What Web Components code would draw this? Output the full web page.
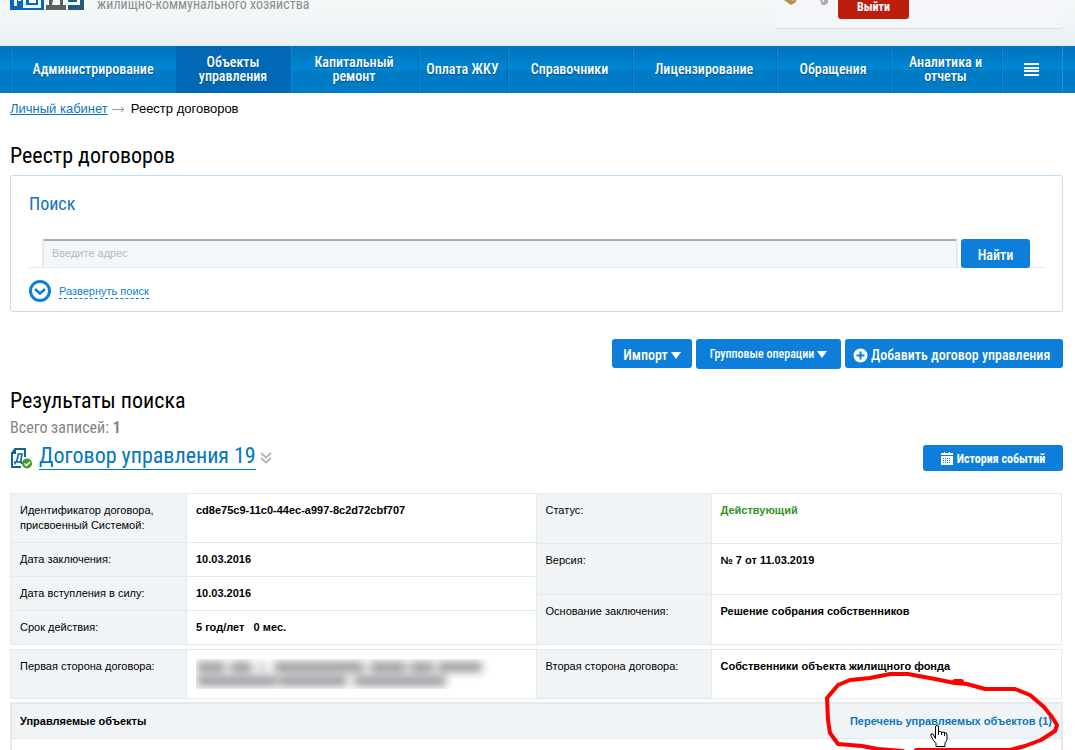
<!DOCTYPE html>
<html lang="ru">
<head>
<meta charset="utf-8">
<title>Реестр договоров</title>
<style>
  :root {
    --cond: "Roboto Condensed", "Liberation Sans Narrow", Roboto, sans-serif;
    --blue: #0d7ed9;
    --link: #0d74bd;
    --line: #e4e9ec;
    --tint: #f0f4f7;
  }
  body { margin: 0; background: #fff; color: #000; font: 11px/15px "Liberation Sans", Arial, sans-serif; }
</style>
</head>
<body>
<registry-page></registry-page>
<script>
const define = (name, html) => customElements.define(name, class extends HTMLElement {
  constructor() {
    super();
    const t = document.createElement('template');
    t.innerHTML = html;
    this.attachShadow({ mode: 'open' }).append(t.content.cloneNode(true));
  }
});

define('site-header', `
<style>
  :host { display: flex; align-items: flex-end; justify-content: space-between; height: 46px; overflow: hidden;
    padding: 0 12px 0 10px; background: linear-gradient(#f5f9f9, #e9f0f3); }
  .brand { display: flex; align-items: flex-end; gap: 13px; padding-bottom: 36px; }
  svg { display: block; }
  .brand p { margin: 0 0 -2px; font: 14px/16px var(--cond); color: #8d8d8d; }
  .user { box-sizing: border-box; display: flex; align-items: flex-end; width: 288px; height: 60px; margin-bottom: 17px;
    padding: 0 4px 9px; background: #f5f6f9; border-bottom: 1px solid #dcdfe1; border-radius: 4px; }
  .user svg { margin-bottom: 13px; }
  button { width: 71px; height: 29px; padding: 5px 0 0; margin-left: 3px; border: 0; border-radius: 3px; background: #bb1e0c; color: #fff;
    font: bold 12px/16px var(--cond); }
</style>
<div class="brand">
  <svg width="74" height="30" viewBox="0 0 74 30" aria-hidden="true">
    <path fill="#0568ba" d="M0 0h34v30H0z"/><path fill="#5f5f5f" d="M36 0h20v30H36z"/><path fill="#225a88" d="M58 0h16v30H58z"/>
    <path fill="none" stroke="#f3f8f9" stroke-width="3" d="M5.500 18v8M9.500 18v3M14.500 18v8.500H29.500V18M19 21.500h7"/>
    <path fill="#f3f8f9" d="M36 18h3v7h-3zM43 20h7v5h-8zM53 18h3v7h-3zM58 22h9v-4h3v7H58z"/>
  </svg>
  <p>жилищно-коммунального хозяйства</p>
</div>
<div class="user">
  <svg width="56" height="20" viewBox="0 0 56 20" aria-hidden="true">
    <path fill="#b98d4e" d="M2 12l10 7 5-3 1-6z"/><path fill="#e8c98c" d="M8 12l6 3 3-3z"/><path fill="#a9abae" d="M40 12h9v5l-3 2h-3z"/><path fill="#dedfe1" d="M40 12h5v5z"/>
  </svg>
  <button type="button">Выйти</button>
</div>`);

define('main-nav', `
<style>
  :host { display: block; padding: 0 12px 0 10px; background: linear-gradient(#0073bd, #0086d4 50%, #007cc6 51%, #007cc6); }
  nav { display: grid; grid-template-columns: 166fr 114fr 128fr 89fr 125fr 144fr 114fr 111fr 61fr; height: 47px;
    border-right: 1px solid #1f90d6; }
  a { display: flex; align-items: center; justify-content: center; padding-bottom: 2px; text-align: center; text-decoration: none; color: #fff;
    font: 500 14px/14px var(--cond); text-shadow: 0 1px 1px #00508c; box-shadow: inset 1px 0 #006cb3, inset 2px 0 #1088d0; }
  a.on { background: #0068b5; box-shadow: none; }
</style>
<nav>
  <a href="#">Администрирование</a><a href="#" class="on">Объекты<br>управления</a><a href="#">Капитальный<br>ремонт</a>
  <a href="#">Оплата ЖКУ</a><a href="#">Справочники</a><a href="#">Лицензирование</a><a href="#">Обращения</a>
  <a href="#">Аналитика и<br>отчеты</a>
  <a href="#" aria-label="Меню"><svg width="15" height="14" viewBox="0 0 15 14"><path fill="#fff" d="M0 1h15v2H0zM0 5h15v2H0zM0 8h15v2H0zM0 12h15v2H0z"/></svg></a>
</nav>`);

define('bread-crumbs', `
<style>
  :host { display: flex; align-items: center; gap: 4px; font-size: 13px; line-height: 16px; }
  a { color: var(--link); }
  svg { display: block; margin-right: 2px; }
</style>
<a href="#">Личный кабинет</a>
<svg width="13" height="7" viewBox="0 0 13 7" aria-hidden="true"><path fill="none" stroke="#999" d="M0 3.500h12M9 1l3 2.500L9 6"/></svg>
<span>Реестр договоров</span>`);

define('search-panel', `
<style>
  :host { display: block; border: 1px solid #bfdff5; border-radius: 3px; padding: 15px 18px 9px; }
  h2 { margin: 0 0 23px; font: 18px/25px var(--cond); color: var(--link); }
  form { display: flex; gap: 3px; padding: 0 14px 0 13px; border-bottom: 1px solid #e4e6e8; }
  input { box-sizing: border-box; flex: 1; min-width: 0; height: 29px; margin: 0 0 -1px; padding: 0 8px 2px; border: 2px solid #e4e9ec; border-bottom-width: 1px;
    border-top-color: #a7abae; border-radius: 3px 3px 0 0; background: #f3f7fc; font: 11px "Liberation Sans", Arial, sans-serif; color: #333; }
  input::placeholder { color: #b9b9b9; opacity: 1; }
  form button { width: 69px; height: 29px; margin: 0 0 -1px; padding: 2px 0 0; border: 0; border-radius: 3px; background: var(--blue); color: #fff; font: 500 14px/16px var(--cond); }
  .more { display: flex; align-items: center; gap: 8px; width: max-content; margin-top: 12px; padding: 0; border: 0; background: none; color: var(--blue);
    font: 11px/14px "Liberation Sans", Arial, sans-serif; }
  .more span { border-bottom: 1px dashed var(--blue); }
  svg { display: block; }
</style>
<h2>Поиск</h2>
<form onsubmit="return false">
  <input type="text" placeholder="Введите адрес" aria-label="Введите адрес"><button type="submit">Найти</button>
</form>
<button type="button" class="more"><svg width="22" height="22" viewBox="0 0 22 22" aria-hidden="true"><circle cx="11" cy="11" r="9.500" fill="none" stroke="#0d7ed9" stroke-width="3"/><path fill="none" stroke="#0d7ed9" stroke-width="2.500" d="M6 9l5 4.500L16 9"/></svg><span>Развернуть поиск</span></button>`);

define('action-bar', `
<style>
  :host { display: flex; justify-content: flex-end; align-items: flex-start; gap: 4px; }
  button { display: flex; align-items: center; justify-content: center; gap: 3px; height: 29px; padding: 3px 12px 0; border: 0; border-radius: 3px;
    background: var(--blue); color: #fff; font: 500 14px/16px var(--cond); white-space: nowrap; }
  .imp { width: 80px; } .grp { width: 145px; height: 30px; padding-top: 0; font-size: 12px; } .add { width: 218px; padding: 3px 8px 0; justify-content: flex-start; }
  svg { display: block; flex: none; }
</style>
<button type="button" class="imp">Импорт <svg width="10" height="7" viewBox="0 0 10 7"><path fill="#fff" d="M0 0h10L5 7z"/></svg></button>
<button type="button" class="grp">Групповые операции <svg width="10" height="7" viewBox="0 0 10 7"><path fill="#fff" d="M0 0h10L5 7z"/></svg></button>
<button type="button" class="add"><svg width="15" height="15" viewBox="0 0 15 15"><circle cx="7.500" cy="7.500" r="7" fill="#fff"/><path stroke="#0d7ed9" stroke-width="2" d="M7.500 3.500v8M3.500 7.500h8"/></svg> Добавить договор управления</button>`);

define('contract-title', `
<style>
  :host { display: flex; align-items: center; height: 28px; }
  a { margin: 0 4px 2px 7px; padding-bottom: 1px; font: 22px/24px var(--cond); color: #0277bd; text-decoration: none; border-bottom: 1px solid #0277bd; }
  svg { display: block; flex: none; }
  button { display: flex; align-items: center; justify-content: center; gap: 4px; width: 140px; height: 26px; margin-left: auto; padding: 1px 0 0; border: 0; border-radius: 3px;
    background: var(--blue); color: #fff; font: bold 12px/16px var(--cond); }
</style>
<svg width="22" height="21" viewBox="0 0 22 21" aria-hidden="true">
  <path fill="none" stroke="#10649b" stroke-width="2" d="M11 19H2V5l3-4h10v8"/><path fill="#10649b" d="M1 6h5V1z"/>
  <path fill="none" stroke="#10649b" stroke-width="1.600" d="M5 16.500v-2.500h6.500v2M6.500 14L8.500 6h3.500l-1.500 8"/>
  <circle cx="17" cy="15.500" r="5" fill="#47992c"/><path fill="none" stroke="#fff" stroke-width="1.500" d="M14.500 15.500l2 2 3.500-3.500"/>
</svg>
<a href="#">Договор управления 19</a>
<svg width="12" height="12" viewBox="0 0 12 12" aria-hidden="true"><path fill="none" stroke="#b5b5b5" stroke-width="1.800" d="M1 1l5 4.500L11 1M1 6l5 4.500L11 6"/></svg>
<button type="button"><svg width="12" height="13" viewBox="0 0 12 13" aria-hidden="true"><path fill="#fff" d="M1 1h2V0h1v1h4V0h1v1h3v2H0V1zM0 4h12v9H0z"/><path stroke="#0d7ed9" stroke-width="1" stroke-dasharray="1 1" d="M2 6.500h8M2 8.500h8M2 10.500h8"/></svg>История событий</button>`);

const tableCss = `
<style>
  :host { display: grid; grid-template-columns: 1fr 1fr; align-items: start; margin-right: 1px; background: linear-gradient(var(--line), var(--line)) 0 0 / 100% 1px no-repeat;
    border-right: 1px solid var(--line); border-bottom: 1px solid var(--line); }
  table { border-spacing: 0; width: 100%; table-layout: fixed; height: 100%; }
  th, td { box-sizing: border-box; padding: 9px; vertical-align: top; text-align: left; border: 0 solid var(--line); border-top-width: 1px; }
  th { width: 177px; font-weight: normal; background: var(--tint); border-left-width: 1px; border-right-width: 1px; }
  td { font-weight: bold; white-space: pre-wrap; }
  table + table th { width: 176px; }
  .a tr { height: 34px; } .b tr { height: 50px; } .c tr { height: 49px; }
  .ok { color: #2f931c; }
  svg { display: block; }
</style>`;

define('contract-details', tableCss + `
<table class="a"><tbody>
  <tr><th scope="row">Идентификатор договора, присвоенный Системой:</th><td>cd8e75c9-11c0-44ec-a997-8c2d72cbf707</td></tr>
  <tr><th scope="row">Дата заключения:</th><td>10.03.2016</td></tr>
  <tr><th scope="row">Дата вступления в силу:</th><td>10.03.2016</td></tr>
  <tr><th scope="row">Срок действия:</th><td>5 год/лет   0 мес.</td></tr>
</tbody></table>
<table class="b"><tbody>
  <tr><th scope="row">Статус:</th><td class="ok">Действующий</td></tr>
  <tr><th scope="row">Версия:</th><td>№ 7 от 11.03.2019</td></tr>
  <tr><th scope="row">Основание заключения:</th><td>Решение собрания собственников</td></tr>
</tbody></table>`);

define('contract-parties', tableCss + `
<table class="c"><tbody><tr><th scope="row">Первая сторона договора:</th><td><svg width="295" height="30" viewBox="0 0 295 30" role="img" aria-label="Скрыто"><g fill="none" stroke="#77737a" stroke-width="10" opacity=".75" style="filter:blur(4px)"><path d="M1 8h28M34 8h22M64 8h4M78 8h90M174 8h36M214 8h24M242 8h44"/><path d="M1 22h80M83 22h68M158 22h92"/></g></svg></td></tr></tbody></table>
<table class="c"><tbody><tr><th scope="row">Вторая сторона договора:</th><td>Собственники объекта жилищного фонда</td></tr></tbody></table>`);

define('managed-objects', `
<style>
  :host { display: block; position: relative; border: 2px solid var(--line); border-bottom: 0; }
  header { display: flex; align-items: center; justify-content: space-between; height: 34px; padding: 0 9px 0 8px; background: var(--tint); border-bottom: 1px solid var(--line); }
  h3 { margin: 0; font: bold 11px/15px "Liberation Sans", Arial, sans-serif; }
  a { color: var(--link); font-weight: bold; text-decoration: none; }
  .body { height: 11px; }
  svg { position: absolute; right: -2px; bottom: 0; pointer-events: none; }
</style>
<header><h3>Управляемые объекты</h3><a href="#">Перечень управляемых объектов (1)</a></header>
<div class="body"></div>
<svg width="240" height="80" viewBox="823 670 240 80" aria-hidden="true">
  <path fill="none" stroke="#f00" stroke-width="4" stroke-linejoin="round" stroke-linecap="round" d="M903 751L878 749 862 746 838 744 830 733 828 720 827 698 838 685 850 680 870 678 890 674 908 674 935 679 955 683 967 684 985 689 1015 689 1030 695 1044 707 1052 717 1057 725 1055 731 1041 740 1025 746 1010 750H916"/>
  <path stroke="#f00" stroke-width="6" stroke-linecap="round" d="M955 682h6"/>
  <path fill="#fff" stroke="#000" stroke-linejoin="round" d="M935.500 738.500V727q0-1.500 1.500-1.500t1.500 1.500v5l2-.500 1.500 1 2-.500 1 1 1.500 0 .500 2v5l-2 3v3.500h-9v-3l-3-4-2-3.500v-2h2z"/>
  <path stroke="#000" d="M938.500 731v4M941.500 732v3M944.500 733v3"/>
</svg>`);

define('registry-page', `
<style>
  :host { display: block; }
  main { padding: 8px 12px 0 10px; }
  h1, h2 { margin: 0; font: 22px/26px var(--cond); }
  h1 { margin-top: 26px; }
  search-panel { margin-top: 6px; }
  action-bar { margin-top: 27px; }
  h2 { margin-top: 19px; }
  .count { margin: 4px 0 0; font: 16px/20px var(--cond); color: #858585; }
  contract-title { margin: 6px 0 21px; }
  contract-parties { margin: 4px 1px 3px 0; }
</style>
<site-header></site-header>
<main-nav></main-nav>
<main>
  <bread-crumbs></bread-crumbs>
  <h1>Реестр договоров</h1>
  <search-panel></search-panel>
  <action-bar></action-bar>
  <h2>Результаты поиска</h2>
  <p class="count">Всего записей: <b>1</b></p>
  <contract-title></contract-title>
  <contract-details></contract-details>
  <contract-parties></contract-parties>
  <managed-objects></managed-objects>
</main>`);
</script>
</body>
</html>
